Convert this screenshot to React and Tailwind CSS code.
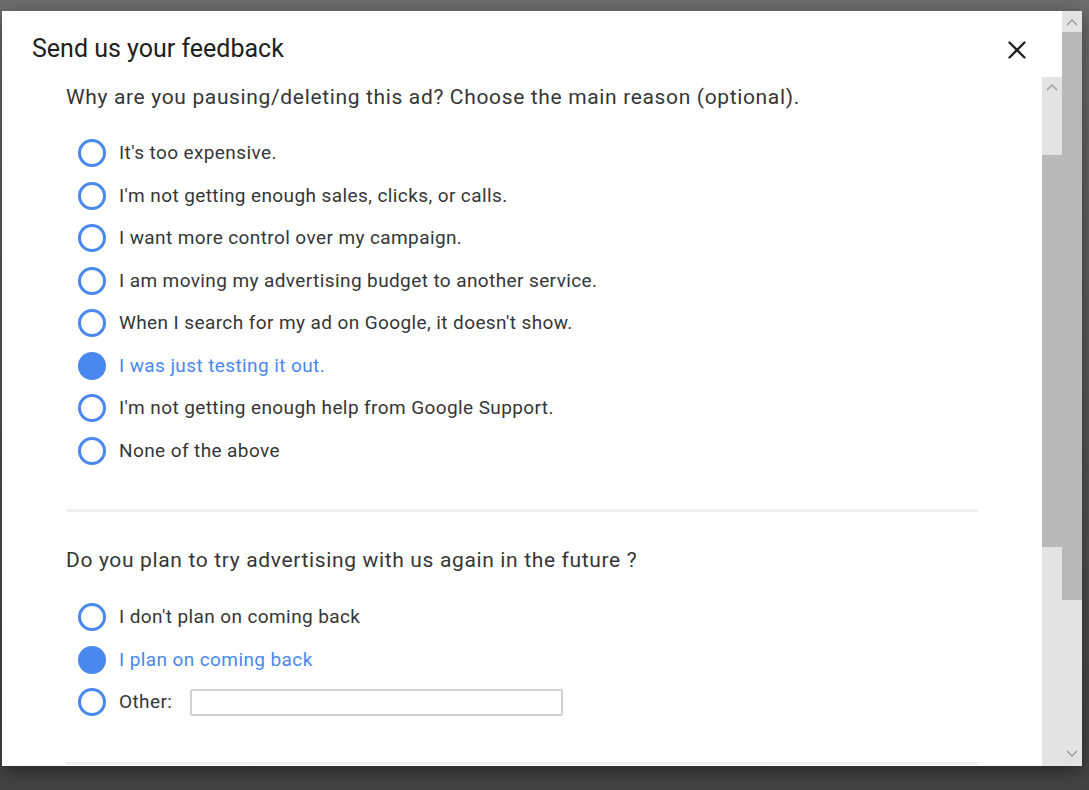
import { useState } from 'react';

const REASONS = [
  "It's too expensive.",
  "I'm not getting enough sales, clicks, or calls.",
  'I want more control over my campaign.',
  'I am moving my advertising budget to another service.',
  "When I search for my ad on Google, it doesn't show.",
  'I was just testing it out.',
  "I'm not getting enough help from Google Support.",
  'None of the above',
];

const PLANS = ["I don't plan on coming back", 'I plan on coming back'];

function Radio({ checked }) {
  return checked ? (
    <span className="block w-[28px] h-[28px] rounded-full bg-[#4a88f0] shrink-0" />
  ) : (
    <span className="block w-[28px] h-[28px] rounded-full border-[3px] border-[#4a88f0] shrink-0" />
  );
}

function Option({ label, checked, onSelect, children }) {
  return (
    <div
      onClick={onSelect}
      className="flex items-center h-[42.5px] pl-[12px] gap-[13px] cursor-pointer"
    >
      <Radio checked={checked} />
      <span className={`text-[19px] tracking-[0.4px] ${checked ? 'text-[#4a88f0]' : 'text-[#363636]'}`}>{label}</span>
      {children}
    </div>
  );
}

function Chevron({ up }) {
  return (
    <svg width="12" height="8" viewBox="0 0 12 8" fill="none" stroke="#9a9a9a" strokeWidth="1.3">
      {up ? <polyline points="1,7 6,2 11,7" /> : <polyline points="1,1 6,6 11,1" />}
    </svg>
  );
}

export default function App() {
  const [reason, setReason] = useState(5);
  const [plan, setPlan] = useState(1);

  return (
    <div
      className="w-full h-screen overflow-hidden bg-gradient-to-b from-[#6d6d6d] to-[#444444] pt-[11px] pl-[2px]"
      style={{ fontFamily: 'Roboto, "Noto Sans", sans-serif' }}
    >
      <div className="w-[1080px] h-[755px] bg-white flex shadow-[0_6px_18px_rgba(0,0,0,0.45)]">
        {/* main column */}
        <div className="flex-1 flex flex-col min-w-0">
          <div className="h-[66px] shrink-0 flex items-start justify-between pl-[30px] pr-[36px] pt-[23px]">
            <h1 className="text-[25px] leading-[30px] text-[#212121]">Send us your feedback</h1>
            <button className="mt-[7px] w-[18px] h-[18px]" aria-label="Close">
              <svg width="18" height="18" viewBox="0 0 18 18" stroke="#222" strokeWidth="2.4" strokeLinecap="round">
                <line x1="1.5" y1="1.5" x2="16.5" y2="16.5" />
                <line x1="16.5" y1="1.5" x2="1.5" y2="16.5" />
              </svg>
            </button>
          </div>

          <div className="flex-1 flex min-h-0">
            <div className="flex-1 overflow-hidden px-[64px]">
              <p className="h-[40px] leading-[40px] text-[21px] tracking-[0.65px] text-[#363636] whitespace-nowrap">
                Why are you pausing/deleting this ad? Choose the main reason (optional).
              </p>
              <div className="mt-[15px]">
                {REASONS.map((r, i) => (
                  <Option key={r} label={r} checked={reason === i} onSelect={() => setReason(i)} />
                ))}
              </div>
              <div className="mt-[37px] h-[3px] bg-[#f0f0f0]" />

              <p className="mt-[28px] h-[40px] leading-[40px] text-[21px] tracking-[0.65px] text-[#363636] whitespace-nowrap">
                Do you plan to try advertising with us again in the future ?
              </p>
              <div className="mt-[16px]">
                {PLANS.map((p, i) => (
                  <Option key={p} label={p} checked={plan === i} onSelect={() => setPlan(i)} />
                ))}
                <Option label="Other:" checked={plan === 2} onSelect={() => setPlan(2)}>
                  <input
                    type="text"
                    className="ml-[5px] w-[373px] h-[27px] border-2 border-[#d2d2d4] rounded-[2px] outline-none px-2 text-[16px]"
                  />
                </Option>
              </div>
              <div className="mt-[38px] h-[3px] bg-[#f0f0f0]" />
            </div>

            {/* inner scrollbar */}
            <div className="w-[20px] shrink-0 bg-[#e3e3e3] flex flex-col">
              <div className="h-[20px] flex items-center justify-center">
                <Chevron up />
              </div>
              <div className="h-[58px]" />
              <div className="h-[392px] bg-[#b9b9b9]" />
            </div>
          </div>
        </div>

        {/* outer scrollbar */}
        <div className="w-[20px] shrink-0 bg-[#e3e3e3] flex flex-col">
          <div className="h-[21px] flex items-center justify-center">
            <Chevron up />
          </div>
          <div className="h-[568px] bg-[#b9b9b9]" />
          <div className="flex-1 flex items-end justify-center pb-[8px]">
            <Chevron />
          </div>
        </div>
      </div>
    </div>
  );
}
